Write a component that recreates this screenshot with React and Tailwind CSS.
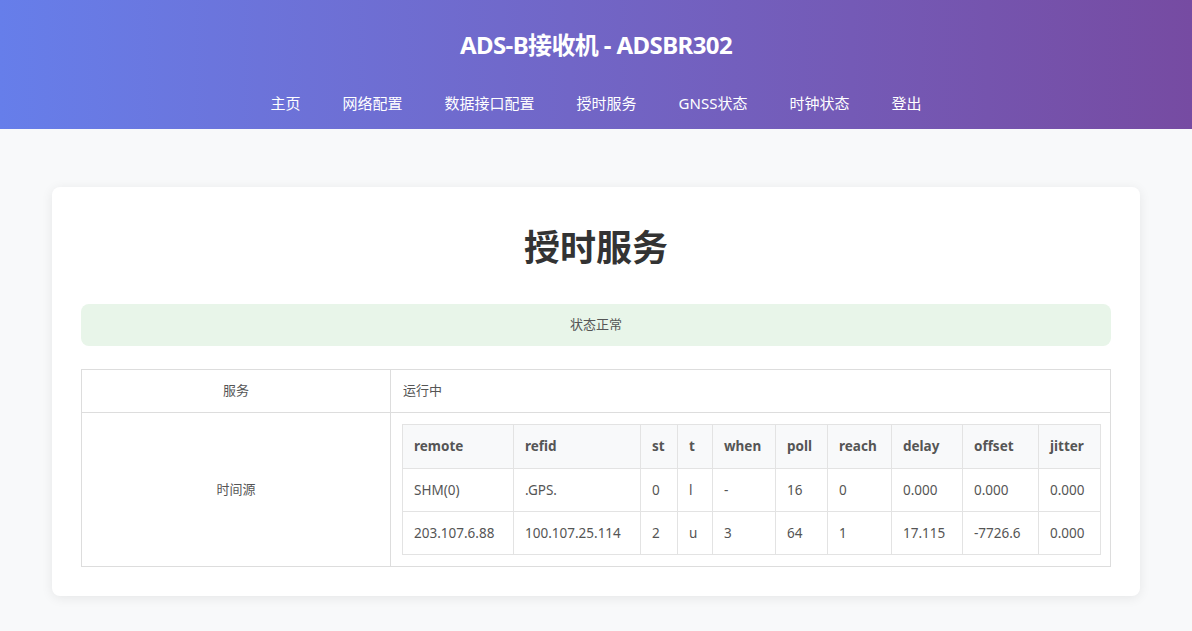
const peers = [
  ["SHM(0)", ".GPS.", "0", "l", "-", "16", "0", "0.000", "0.000", "0.000"],
  ["203.107.6.88", "100.107.25.114", "2", "u", "3", "64", "1", "17.115", "-7726.6", "0.000"],
];

const cols = [
  { name: "remote", w: "w-[111px]" },
  { name: "refid", w: "w-[127px]" },
  { name: "st", w: "w-[37px]" },
  { name: "t", w: "w-[35px]" },
  { name: "when", w: "w-[63px]" },
  { name: "poll", w: "w-[52px]" },
  { name: "reach", w: "w-[64px]" },
  { name: "delay", w: "w-[71px]" },
  { name: "offset", w: "w-[76px]" },
  { name: "jitter", w: "w-[62px]" },
];

const navItems = ["主页", "网络配置", "数据接口配置", "授时服务", "GNSS状态", "时钟状态", "登出"];

export default function App() {
  return (
    <div
      className="min-h-[631px] bg-[#f8f9fa] text-[#555]"
      style={{ fontFamily: '"Noto Sans", "Noto Sans CJK SC", sans-serif' }}
    >
      {/* Header */}
      <header className="h-[129px] bg-gradient-to-r from-[#667eea] to-[#764ba2] text-white flex flex-col items-center">
        <h1 className="mt-[29px] text-[24px] font-bold leading-[32px] tracking-tight">
          ADS-B接收机 - ADSBR302
        </h1>
        <nav className="mt-[32px] flex gap-[42px] text-[15px] leading-[20px]">
          {navItems.map((item) => (
            <a key={item} className="cursor-pointer">{item}</a>
          ))}
        </nav>
      </header>

      {/* Card */}
      <div className="px-[52px] pt-[58px] pb-[34px]">
        <div className="bg-white rounded-[8px] shadow-[0_2px_12px_rgba(0,0,0,0.08)] px-[29px] pt-[38px] pb-[29px]">
          <h2 className="text-center text-[36px] font-bold text-[#333] leading-[46px]">授时服务</h2>

          <div className="mt-[33px] h-[42px] rounded-[8px] bg-[#e8f5e9] flex items-center justify-center text-[13px] text-[#555]">
            状态正常
          </div>

          <table className="mt-[23px] w-full border-collapse table-fixed text-[13px]">
            <colgroup>
              <col className="w-[309px]" />
              <col />
            </colgroup>
            <tbody>
              <tr className="h-[43px]">
                <td className="border border-[#ddd] text-center">服务</td>
                <td className="border border-[#ddd] px-[12px]">运行中</td>
              </tr>
              <tr>
                <td className="border border-[#ddd] text-center">时间源</td>
                <td className="border border-[#ddd] px-[11px] py-[11px]">
                  <table className="w-full border-collapse table-fixed text-[13.5px]">
                    <thead>
                      <tr className="h-[44px] bg-[#f8f9fa]">
                        {cols.map((c) => (
                          <th key={c.name} className={`${c.w} border border-[#e3e3e3] px-[11px] text-left font-bold text-[#555]`}>
                            {c.name}
                          </th>
                        ))}
                      </tr>
                    </thead>
                    <tbody>
                      {peers.map((row, i) => (
                        <tr key={i} className="h-[43px]">
                          {row.map((v, j) => (
                            <td key={j} className="border border-[#e3e3e3] px-[11px] whitespace-nowrap">
                              {v}
                            </td>
                          ))}
                        </tr>
                      ))}
                    </tbody>
                  </table>
                </td>
              </tr>
            </tbody>
          </table>
        </div>
      </div>
    </div>
  );
}
